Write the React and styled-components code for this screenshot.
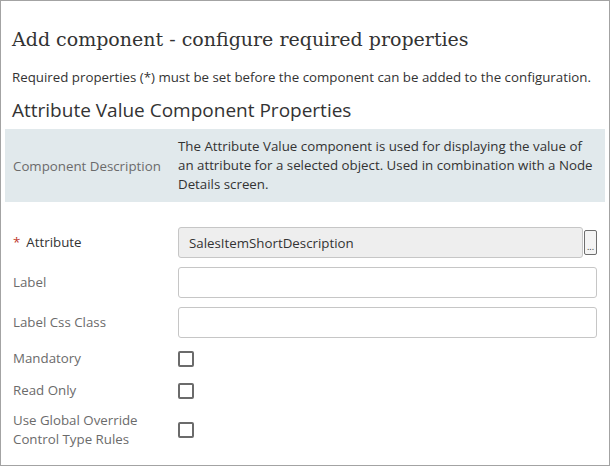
import React from "react";
import styled, { createGlobalStyle } from "styled-components";

const Global = createGlobalStyle`
  html, body { margin: 0; padding: 0; background: #fff; }
  body { font-family: "Open Sans", "Liberation Sans", sans-serif; color: #333; }
  * { box-sizing: border-box; }
`;

const Frame = styled.div`
  width: 610px;
  height: 466px;
  border: 1px solid #a3a3a3;
  padding: 0 4px;
  overflow: hidden;
`;

const Title = styled.h1`
  margin: 26px 0 0 7px;
  font-family: "DejaVu Serif", "Liberation Serif", serif;
  font-weight: normal;
  font-size: 19px;
  line-height: 24px;
  color: #333;
`;

const Intro = styled.p`
  margin: 17px 0 0 7px;
  font-size: 13.3px;
  line-height: 18px;
  color: #333;
`;

const SectionTitle = styled.h2`
  margin: 11px 0 0 7px;
  font-weight: normal;
  font-size: 19px;
  line-height: 26px;
  color: #333;
`;

const DescBox = styled.div`
  margin-top: 6px;
  background: #e1e9ec;
  display: grid;
  grid-template-columns: 165px 1fr;
  align-items: center;
  padding: 8px;
  min-height: 73px;
`;

const DescLabel = styled.div`
  font-size: 13.3px;
  color: #6b6b6b;
`;

const DescText = styled.div`
  font-size: 13.3px;
  line-height: 19px;
  color: #333;
`;

const Form = styled.div`
  margin-top: 25px;
  display: grid;
  grid-template-columns: 165px 1fr;
  row-gap: 9px;
  align-items: center;
  padding: 0 8px;
`;

const Label = styled.div`
  font-size: 13.3px;
  line-height: 19px;
  color: ${(p) => (p.$dark ? "#333" : "#6b6b6b")};
`;

const Star = styled.span`
  color: #c0392b;
  margin-right: 6px;
`;

const FieldRow = styled.div`
  display: flex;
  align-items: center;
  gap: 1px;
`;

const TextInput = styled.div`
  flex: 1;
  height: 31px;
  border: 1px solid #c6c6c6;
  border-radius: 3px;
  background: ${(p) => (p.$readonly ? "#eeeeee" : "#fff")};
  display: flex;
  align-items: center;
  padding: 0 10px;
  font-size: 13.3px;
  color: #333;
`;

const PickButton = styled.div`
  width: 13px;
  height: 25px;
  border: 1px solid #6e6e6e;
  border-radius: 2px;
  background: #f4f4f4;
  display: flex;
  align-items: flex-end;
  justify-content: center;
  font-size: 9px;
  line-height: 14px;
  color: #333;
`;

const CheckCell = styled.div`
  display: flex;
  align-items: center;
  height: 23px;
`;

const CheckBox = styled.div`
  width: 16px;
  height: 16px;
  border: 2px solid #6b6b6b;
  border-radius: 2px;
  background: #fff;
`;

export default function App() {
  return (
    <>
      <Global />
      <Frame>
        <Title>Add component - configure required properties</Title>
        <Intro>Required properties (*) must be set before the component can be added to the configuration.</Intro>
        <SectionTitle>Attribute Value Component Properties</SectionTitle>
        <DescBox>
          <DescLabel>Component Description</DescLabel>
          <DescText>
            The Attribute Value component is used for displaying the value of an attribute for a selected object. Used in combination with a Node Details screen.
          </DescText>
        </DescBox>
        <Form>
          <Label $dark><Star>*</Star>Attribute</Label>
          <FieldRow>
            <TextInput $readonly>SalesItemShortDescription</TextInput>
            <PickButton>...</PickButton>
          </FieldRow>
          <Label>Label</Label>
          <TextInput />
          <Label>Label Css Class</Label>
          <TextInput />
          <Label>Mandatory</Label>
          <CheckCell><CheckBox /></CheckCell>
          <Label>Read Only</Label>
          <CheckCell><CheckBox /></CheckCell>
          <Label>Use Global Override<br />Control Type Rules</Label>
          <CheckCell><CheckBox /></CheckCell>
        </Form>
      </Frame>
    </>
  );
}
